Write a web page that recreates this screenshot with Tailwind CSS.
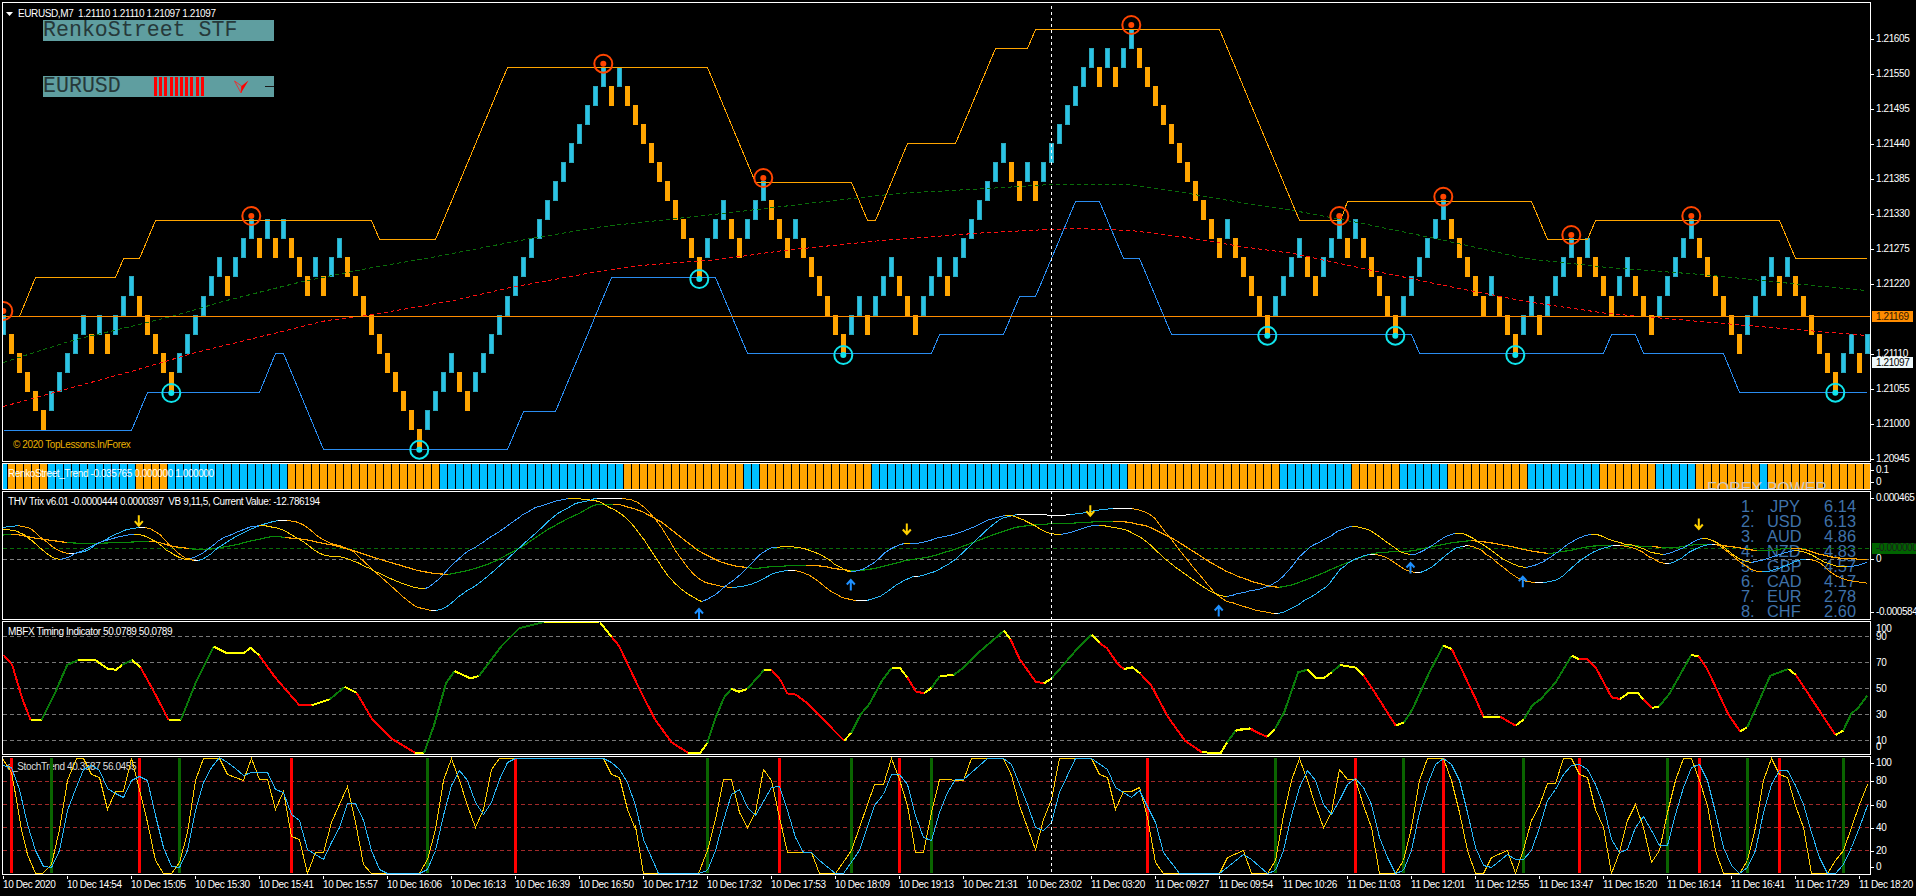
<!DOCTYPE html>
<html lang="en">
<head>
<meta charset="UTF-8">
<title>EURUSD,M7</title>
<script src="https://cdn.jsdelivr.net/npm/@tailwindcss/browser@4"></script>
</head>
<body class="bg-black">
<div class="w-[1916px] h-[896px] overflow-hidden bg-black text-white pt-[2px] pl-[2px] flex flex-col gap-px font-['Liberation_Sans'] text-[10px] tracking-[-0.4px] leading-none">

  <!-- main chart -->
  <div class="flex h-[461px]">
    <div id="mainPane" class="relative w-[1869px] border border-white overflow-hidden">
      <div class="absolute left-[3px] top-[6px] z-10 flex items-center gap-[5px] whitespace-pre">
        <svg width="7" height="4" viewBox="0 0 7 4"><path d="M0 0H7L3.5 4Z" fill="#fff"/></svg>
        <span>EURUSD,M7  1.21110 1.21110 1.21097 1.21097</span>
      </div>
      <div class="absolute left-[40px] top-[17px] z-10 flex flex-col gap-[35px] w-[231px] font-['Liberation_Mono'] text-[21.6px] tracking-normal text-[#26393a]">
        <div class="h-[21px] bg-[#5f9ea0] flex items-center">RenkoStreet STF</div>
        <div class="relative h-[21px] bg-[#5f9ea0] flex items-center">
          <span class="w-[111px]">EURUSD</span>
          <div class="flex gap-[2.2px] h-[19px]">
            <i class="w-[3px] bg-[#ff0000]"></i><i class="w-[3px] bg-[#ff0000]"></i><i class="w-[3px] bg-[#ff0000]"></i><i class="w-[3px] bg-[#ff0000]"></i><i class="w-[3px] bg-[#ff0000]"></i><i class="w-[3px] bg-[#ff0000]"></i><i class="w-[3px] bg-[#ff0000]"></i><i class="w-[3px] bg-[#ff0000]"></i><i class="w-[3px] bg-[#ff0000]"></i><i class="w-[3px] bg-[#ff0000]"></i>
          </div>
          <svg class="ml-[30px]" width="15" height="14" viewBox="0 0 15 14"><path d="M0.5 1L7 13L7.5 6Z" fill="none" stroke="#ff2020" stroke-width="0.8"/><path d="M14.5 0.5L7.5 6L7 13Z" fill="#ff0000"/></svg>
          <span class="ml-auto w-[9px] h-px bg-[#1a1a1a]"></span>
        </div>
      </div>
      <div class="absolute left-[10px] top-[437px] z-10 text-[#e8b000] whitespace-pre">© 2020 TopLessons.In/Forex</div>
    </div>
    <div id="mainAxis" class="relative flex-1"></div>
  </div>

  <!-- trend strip -->
  <div class="flex h-[27px]">
    <div id="trendPane" class="relative w-[1869px] border border-white overflow-hidden">
      <div class="absolute left-[5px] top-[5px] z-10 whitespace-pre">RenkoStreet_Trend -0.035765 0.000000 1.000000</div>
      <div class="absolute left-[1704px] top-[17px] z-10 text-[16px] tracking-normal text-[#c8c8c8] whitespace-pre">FOREX POWER</div>
    </div>
    <div id="trendAxis" class="relative flex-1"></div>
  </div>

  <!-- THV Trix -->
  <div class="flex h-[129px]">
    <div id="trixPane" class="relative w-[1869px] border border-white overflow-hidden">
      <div class="absolute left-[5px] top-[5px] z-10 whitespace-pre">THV Trix v6.01 -0.0000444 0.0000397  VB 9,11,5, Current Value: -12.786194</div>
      <div class="absolute left-[1738px] top-[7px] grid grid-cols-[26px_33px_56px] text-[16.4px] leading-[15px] tracking-normal text-[#3f72aa] whitespace-pre">
        <span>1.</span><span class="text-right">JPY</span><span class="text-right">6.14</span>
        <span>2.</span><span class="text-right">USD</span><span class="text-right">6.13</span>
        <span>3.</span><span class="text-right">AUD</span><span class="text-right">4.86</span>
        <span>4.</span><span class="text-right">NZD</span><span class="text-right">4.83</span>
        <span>5.</span><span class="text-right">GBP</span><span class="text-right">4.57</span>
        <span>6.</span><span class="text-right">CAD</span><span class="text-right">4.17</span>
        <span>7.</span><span class="text-right">EUR</span><span class="text-right">2.78</span>
        <span>8.</span><span class="text-right">CHF</span><span class="text-right">2.60</span>
      </div>
    </div>
    <div id="trixAxis" class="relative flex-1"></div>
  </div>

  <!-- MBFX -->
  <div class="flex h-[134px]">
    <div id="mbfxPane" class="relative w-[1869px] border border-white overflow-hidden">
      <div class="absolute left-[5px] top-[5px] z-10 whitespace-pre">MBFX Timing Indicator 50.0789 50.0789</div>
    </div>
    <div id="mbfxAxis" class="relative flex-1"></div>
  </div>

  <!-- StochTrend -->
  <div class="flex h-[119px]">
    <div id="stochPane" class="relative w-[1869px] border border-white overflow-hidden">
      <div class="absolute left-[4px] top-[5px] whitespace-pre text-[#dddddd]">e_StochTrend 40.3587 56.0455</div>
    </div>
    <div id="stochAxis" class="relative flex-1"></div>
  </div>

  <!-- time axis -->
  <div id="timeAxis" class="flex pl-px"></div>
</div>

<script>
  const NS = "http://www.w3.org/2000/svg";
  const CROSS_X = 1051.5;
  const THIN = 1;

  // zoomed trace -> page pixels
  const map = (s, sx, ox, oy, sy = 3) => s.trim().split(/\s+/).map(t => {
    const [a, b] = t.split(",").map(Number);
    return [ox + a / sx, oy + b / sy];
  });
  const snap = pts => pts.map(([x, y]) => [Math.floor(x) + .5, Math.floor(y) + .5]);

  // corner cutting, the indicator curves are smooth
  function chaikin(pts, rounds = 2) {
    let out = pts;
    for (let r = 0; r < rounds; r++) {
      const next = [out[0]];
      for (let i = 1; i < out.length; i++) {
        const [a, b] = [out[i - 1], out[i]];
        next.push([a[0] * .75 + b[0] * .25, a[1] * .75 + b[1] * .25], [a[0] * .25 + b[0] * .75, a[1] * .25 + b[1] * .75]);
      }
      next.push(out[out.length - 1]);
      out = next;
    }
    return out;
  }

  function el(parent, tag, attrs) {
    const node = document.createElementNS(NS, tag);
    for (const k in attrs) node.setAttribute(k, attrs[k]);
    parent.appendChild(node);
    return node;
  }

  function paneSvg(id, top, h) {
    const svg = el(document.getElementById(id), "svg", {
      viewBox: `3 ${top + 1} 1867 ${h - 2}`, width: 1867, height: h - 2,
      "shape-rendering": "crispEdges"
    });
    svg.classList.add("absolute", "inset-0");
    return svg;
  }

  const poly = (svg, pts, color, extra = {}) => el(svg, "polyline", {
    points: pts.map(p => p.join(",")).join(" "), fill: "none", stroke: color, "stroke-width": 1, ...extra
  });
  const thin = (svg, pts, color, extra = {}) => poly(svg, snap(pts), color, { "stroke-width": THIN, ...extra });
  const dashed = (svg, y, color, dash = "4 3") => el(svg, "line", {
    x1: 3, x2: 1870, y1: y + .5, y2: y + .5, stroke: color, "stroke-dasharray": dash
  });
  const cross = svg => el(svg, "line", {
    x1: CROSS_X, x2: CROSS_X, y1: 0, y2: 900, stroke: "#fff", "stroke-dasharray": "3 3"
  });

  // segments coloured by direction
  function slopeLine(svg, pts, up, down, flat, width = THIN) {
    for (let i = 1; i < pts.length; i++) {
      const dy = pts[i][1] - pts[i - 1][1], dx = pts[i][0] - pts[i - 1][0];
      const c = Math.abs(dy) < Math.abs(dx) * .06 ? flat : dy < 0 ? up : down;
      el(svg, "line", { x1: pts[i - 1][0], y1: Math.floor(pts[i - 1][1]) + .5, x2: pts[i][0], y2: Math.floor(pts[i][1]) + .5, stroke: c, "stroke-width": width });
    }
  }

  function axis(id, items, top) {
    const box = document.getElementById(id);
    items.forEach(([y, text, tick]) => {
      const label = document.createElement("div");
      label.className = "absolute left-[5px] -translate-y-1/2 whitespace-pre";
      label.style.top = (y - top) + "px";
      label.textContent = text;
      box.appendChild(label);
      if (tick) {
        const t = document.createElement("div");
        t.className = "absolute left-0 w-[3px] h-px bg-white";
        t.style.top = Math.round(y - top) + "px";
        box.appendChild(t);
      }
    });
  }

  function tag(id, y, h, text, cls, top) {
    const t = document.createElement("div");
    t.className = "absolute left-px h-[11px] flex items-center pl-[4px] z-10 whitespace-pre overflow-hidden " + cls;
    t.style.top = (y - top) + "px";
    t.textContent = text;
    document.getElementById(id).appendChild(t);
  }

  /* ---------- main pane ---------- */
  const bricks = `15u 16d 17d 18d 19d 20d 19u 18u 17u 16u 15u 16d 15u 16d 15u 14u 13u 14d 15d 16d 17d 18d
    17u 16u 15u 14u 13u 12u 13d 12u 11u 10u 11d 10u 11d 10u 11d 12d 13d 12u 13d 12u 11u 12d 13d 14d 15d 16d 17d 18d 19d 20d 21d
    20u 19u 18u 17u 18d 19d 18u 17u 16u 15u 14u 13u 12u 11u 10u 9u 8u 7u 6u 5u 4u 3u 2u 3d 2u 3d 4d 5d 6d 7d 8d 9d 10d 11d 12d
    11u 10u 9u 10d 11d 10u 9u 8u 9d 10d 11d 10u 11d 12d 13d 14d 15d 16d 15u 14u 15d 14u 13u 12u 13d 14d 15d 14u 13u 12u 13d
    12u 11u 10u 9u 8u 7u 6u 7d 8d 7u 8d 7u 6u 5u 4u 3u 2u 1u 2d 1u 2d 1u 0u 1d 2d 3d 4d 5d 6d 7d 8d 9d 10d 11d 10u 11d
    12d 13d 14d 15d 14u 13u 12u 11u 12d 13d 12u 11u 10u 11d 10u 11d 12d 13d 14d 15d 14u 13u 12u 11u 10u 9u 10d 11d 12d 13d 14d
    13u 14d 15d 16d 15u 14u 15d 14u 13u 12u 11u 12d 11u 12d 13d 14d 13u 12u 13d 14d 15d 14u 13u 12u 11u 10u 11d 12d 13d 14d 15d 16d
    15u 14u 13u 12u 13d 12u 13d 14d 15d 16d 17d 18d 17u 16u 17d 16u`.trim().split(/\s+/);

  const main = paneSvg("mainPane", 2, 461);
  const z9 = (s, sy = 3) => map(s, 2.45, 600, 0, sy);
  const z10 = s => map(s, 2.45, 1240, 170);

  bricks.forEach((b, i) => {
    const n = parseInt(b), up = b.endsWith("u");
    el(main, "rect", {
      x: 8 * i + 1.5, y: Math.floor(29.3 + 19.05 * n) + .5, width: 4, height: 19,
      fill: up ? "#2bc3e6" : "#ffa500", stroke: up ? "#2aa9bd" : "#ffa500"
    });
  });

  // moving averages
  const green = [...map("8,187 100,150 185,118 300,85 420,48 555,0", 2.45, 0, 300),
    ...map("740,845 900,805 1070,770 1300,715", 2.45, 0, 0),
    ...z9("8,680 300,640 530,607 730,580 950,565 1105,553 1290,553 1400,570"),
    ...z10("0,97 130,122 300,160 480,205 700,265 900,292 1130,313 1350,340 1535,362")];
  const red = [...map("8,318 150,270 330,212 480,158 650,105 800,60 900,45 1110,0", 2.45, 0, 300),
    ...map("1250,862", 2.45, 0, 0),
    ...z9("8,812 100,797 290,777 450,750 690,722 950,697 1100,689 1170,685 1300,691 1440,712"),
    ...z10("0,229 130,250 300,295 500,345 700,395 900,430 1100,452 1300,472 1535,497")];
  thin(main, green, "#0a6e0a", { "stroke-dasharray": "4 3" });
  thin(main, red, "#ff1010", { "stroke-dasharray": "4 3" });

  // resistance / support
  thin(main, [[3,316],[19.5,316],[35.5,277.5],[115.5,277.5],[123.5,258.5],[139.5,258.5],[155.5,220.5],[371,220.5],[379.6,239.5],[435.9,239.5],[507.7,67.5],[707.8,67.5],[755.5,182.5],[851.4,182.5],[867.3,220.5],[875.9,220.5],[907.3,143.5],[955.5,143.5],[995.5,48.5],[1027.3,48.5],[1035.5,29.5],[1219.6,29.5],[1278.4,170],[1299.6,220.5],[1340,220.5],[1347.3,201.5],[1531.4,201.5],[1547.3,239.5],[1587.3,239.5],[1595.5,220.5],[1779.6,220.5],[1795.5,258.5],[1866.5,258.5]], "#ffa500");
  thin(main, [[3,430.5],[131.4,430.5],[147.3,392.5],[259.6,392.5],[275.5,353.5],[283.7,353.5],[323.7,449.5],[507.3,449.5],[523.3,411.5],[555.5,411.5],[611.4,277.5],[715.5,277.5],[747.3,353.5],[931.4,353.5],[939.6,334.5],[1003.7,334.5],[1019.6,296.5],[1035.5,296.5],[1075.5,201.5],[1099.6,201.5],[1123.3,258.5],[1139.6,258.5],[1171.4,334.5],[1411.4,334.5],[1419.6,353.5],[1603.3,353.5],[1611.4,334.5],[1635.5,334.5],[1643.7,353.5],[1723.7,353.5],[1739.6,392.5],[1866.5,392.5]], "#2a8cf0");

  // current bid line
  el(main, "rect", { x: 3, y: 316, width: 1867, height: 1, fill: "#ff8c00" });

  // swing markers
  const marks = [[0,311,"#ff4500"],[31,216,"#ff4500"],[75,63.7,"#ff4500"],[95,178,"#ff4500"],[141,25,"#ff4500"],[167,216,"#ff4500"],[180,196.7,"#ff4500"],[196,235,"#ff4500"],[211,216,"#ff4500"],
    [21,393,"#10e4ec"],[52,449.7,"#10e4ec"],[87,279,"#10e4ec"],[105,355,"#10e4ec"],[158,335.7,"#10e4ec"],[174,335.7,"#10e4ec"],[189,355,"#10e4ec"],[229,392.7,"#10e4ec"]];
  marks.forEach(([i, y, c]) => {
    const x = 8 * i + 3.3;
    el(main, "circle", { cx: x, cy: y, r: 9, fill: "none", stroke: c, "stroke-width": 2, "shape-rendering": "auto" });
    el(main, "circle", { cx: x, cy: y, r: 3, fill: c, "shape-rendering": "auto" });
  });
  cross(main);

  const prices = ["1.21605","1.21550","1.21495","1.21440","1.21385","1.21330","1.21275","1.21220",null,"1.21110","1.21055","1.21000","1.20945"];
  axis("mainAxis", prices.map((p, k) => [38.6 + 35 * k, p, true]).filter(r => r[1]), 2);
  tag("mainAxis", 311, 11, "1.21169", "w-[41px] bg-[#ff8c00] text-[#2a1600]", 2);
  tag("mainAxis", 357, 11, "1.21097", "w-[41px] bg-[#eef8fa] text-black", 2);

  /* ---------- trend strip ---------- */
  const trend = paneSvg("trendPane", 464, 27);
  const blueRuns = [[0,0],[6,16],[21,35],[55,77],[93,94],[109,140],[160,168],[175,180],[191,199],[207,211],[220,220]];
  for (let i = 0; i < 234; i++) {
    const blue = blueRuns.some(([a, b]) => i >= a && i <= b);
    el(trend, "rect", { x: 8 * i, y: 465, width: 7, height: 25, fill: blue ? "#00bfff" : "#ffa500" });
  }
  axis("trendAxis", [[471, "0.1", true], [483, "0", true]], 464);

  /* ---------- THV Trix ---------- */
  const trix = paneSvg("trixPane", 492, 129);
  const z3 = s => map(s, 2.45, 0, 440);
  const z11 = s => map(s, 2.376, 600, 460);
  const z12 = s => map(s, 2.376, 1240, 460);
  dashed(trix, 549, "#0a6e0a");
  dashed(trix, 560, "#808080");

  const sig = [...z3("7,288 40,285 180,318 340,307 380,307 450,330 540,330 650,295 700,292 830,320 1060,412 1160,395 1250,345 1350,265 1460,197"),
    ...z11("0,135 50,135 130,170 250,295 340,330 420,322 500,317 590,335 640,332 720,305 780,295 880,255 980,205 1040,195 1130,192 1210,184 1290,195 1350,230 1470,325"),
    ...z12("0,355 75,385 120,383 240,320 300,285 350,278 420,275 520,243 600,250 720,283 750,283 840,258 950,260 1030,267 1090,255 1150,258 1240,280 1320,262 1400,295 1490,302")];
  const fast = [...z3("7,270 40,275 70,295 100,330 140,367 190,342 250,305 320,286 345,286 380,305 420,345 460,366 500,340 540,300 600,268 640,257 690,270 740,305 790,352 850,355 900,385 950,415 1030,453 1060,440 1130,350 1170,320 1250,255 1300,210 1380,178 1410,178 1460,185"),
    ...z11("0,130 60,170 110,250 170,370 235,427 255,425 300,380 345,335 380,285 410,262 480,265 530,290 575,330 597,340 640,325 700,255 760,253 800,237 850,227 960,160 1010,185 1070,227 1110,225 1170,197 1210,200 1280,225 1350,310 1470,418"),
    ...z12("0,402 70,385 105,350 160,265 205,240 240,210 280,200 320,220 390,290 430,283 500,222 530,222 570,250 660,330 710,320 790,245 840,220 900,252 940,260 1000,292 1050,270 1095,235 1130,245 1200,315 1240,305 1330,265 1400,320 1450,325 1490,310")];
  const slow = [...z3("7,265 65,258 100,295 150,342 200,345 250,305 320,265 375,265 420,325 460,365 500,363 550,310 650,247 735,243 800,315 850,322 900,375 1000,490 1040,513 1085,513 1130,465 1170,440 1280,320 1380,205 1460,178"),
    ...z11("0,118 85,118 140,190 200,320 255,380 350,388 420,335 490,335 560,410 600,424 655,424 730,355 770,352 840,310 900,235 960,167 1040,168 1130,168 1205,148 1300,148 1350,230 1400,310 1470,418"),
    ...z12("0,440 65,463 105,463 160,420 210,380 240,325 290,287 340,287 400,340 445,340 510,262 560,260 600,300 670,370 750,372 800,310 860,262 930,258 995,313 1035,313 1070,275 1110,255 1140,256 1210,335 1260,340 1330,300 1370,300 1420,360 1490,372")];
  slopeLine(trix, chaikin(sig), "#0a8a0a", "#ffa500", "#0a8a0a", 1.2);
  slopeLine(trix, chaikin(slow), "#29b6f6", "#ffa500", "#ffffff");
  slopeLine(trix, chaikin(fast), "#3a9cff", "#ffcc00", "#ffcc00");

  function arrow(x, y, down) {
    const s = down ? 1 : -1;
    el(trix, "path", {
      d: `M${x} ${y - 5.5 * s}V${y + 5 * s}M${x - 4} ${y + .5 * s}L${x} ${y + 5 * s}L${x + 4} ${y + .5 * s}`,
      fill: "none", stroke: down ? "#ffd000" : "#1e90ff", "stroke-width": 2, "shape-rendering": "auto"
    });
  }
  [[138.8,521.7],[906.8,530],[1090.3,511.7],[1698.8,525]].forEach(([x, y]) => arrow(x, y, true));
  [[699,615],[850.8,586],[1218.7,612],[1410.5,569],[1522.8,582.7]].forEach(([x, y]) => arrow(x, y, false));
  cross(trix);
  axis("trixAxis", [[499, "0.000465", true], [560, "0", true], [613, "-0.000584", true]], 492);
  tag("trixAxis", 543.5, 11, "-0.000000", "w-[45px] bg-[#006400] text-[#1c1c1c]", 492);

  /* ---------- MBFX ---------- */
  const mbfx = paneSvg("mbfxPane", 622, 134);
  [637, 663, 689, 715, 741].forEach(y => dashed(mbfx, y, "#777777"));
  const ov = s => map(s, 0.8184, 0, 0, 0.8184);
  const runs = [
    ["R", ov("3,537 10,545 18,572 25,590")], ["Y", ov("25,590 34,590")], ["G", ov("34,590 45,568 55,545 64,541")],
    ["Y", ov("64,541 78,541 88,548 95,549 100,545")], ["G", ov("100,545 108,541")], ["Y", ov("108,541 115,547")],
    ["R", ov("115,547 125,565 138,590")], ["Y", ov("138,590 148,590")], ["G", ov("148,590 160,560 175,530")],
    ["Y", ov("175,530 185,535 200,535 205,531 212,537")], ["R", ov("212,537 225,555 245,578 255,578")], ["Y", ov("255,578 270,573")],
    ["G", ov("270,573 282,563")], ["Y", ov("282,563 292,568")], ["R", ov("292,568 305,590 320,605 340,617")],
    ["Y", ov("340,617 347,617")], ["G", ov("347,617 355,595 365,560 372,550")], ["Y", ov("372,550 385,556 392,554")],
    ["G", ov("392,554 410,530 425,515 445,510")], ["Y", ov("445,510 490,510")],
    ["Y", z11("0,490 27,533")], ["R", z11("27,533 45,560 90,680 130,780 170,850 210,882")], ["Y", z11("210,882 238,882 255,852")],
    ["G", z11("255,852 275,775 295,715 312,690")], ["Y", z11("312,690 330,698 350,690")], ["G", z11("350,690 385,640 390,632")],
    ["Y", z11("390,632 407,632")], ["R", z11("407,632 430,665 445,703 465,707 490,730 580,845")], ["Y", z11("580,845 597,822")],
    ["G", z11("597,822 620,765 640,735 670,665 693,626")], ["Y", z11("693,626 712,626 730,655")], ["R", z11("730,655 750,697 770,703")],
    ["Y", z11("770,703 787,687")], ["G", z11("787,687 808,651")], ["Y", z11("808,651 840,648")], ["G", z11("840,648 865,625 900,580 960,515")],
    ["Y", z11("960,515 975,540")], ["R", z11("975,540 997,600 1035,668 1055,673")], ["Y", z11("1055,673 1073,658")],
    ["G", z11("1073,658 1130,575 1168,527")], ["Y", z11("1168,527 1187,552")], ["R", z11("1187,552 1205,568 1230,615 1245,630")],
    ["Y", z11("1245,630 1265,625 1283,643")], ["R", z11("1283,643 1310,680 1350,775 1390,845 1430,880")], ["Y", z11("1430,880 1475,882 1490,850")],
    ["G", z11("1490,850 1510,815")], ["Y", z11("1510,815 1545,808")], ["R", z11("1545,808 1568,825")],
    ["Y", z12("0,810 25,810")], ["R", z12("25,810 65,834")], ["Y", z12("65,834 83,810")], ["G", z12("83,810 105,760 138,640 160,632")],
    ["Y", z12("160,632 180,657 200,657 218,640")], ["G", z12("218,640 238,618")], ["Y", z12("238,618 275,626 293,648")],
    ["R", z12("293,648 315,690 370,800")], ["Y", z12("370,800 390,790")], ["G", z12("390,790 410,750 450,640 483,560")],
    ["Y", z12("483,560 503,570")], ["R", z12("503,570 530,640 560,720 578,773")], ["Y", z12("578,773 618,773")],
    ["R", z12("618,773 655,800")], ["Y", z12("655,800 675,780")], ["G", z12("675,780 695,738 715,720 750,670 788,590")],
    ["Y", z12("788,590 805,600")], ["R", z12("805,600 825,600 845,625 883,715 903,720")], ["Y", z12("903,720 923,702 945,702 958,720")],
    ["R", z12("958,720 978,747")], ["Y", z12("978,747 995,743")], ["G", z12("995,743 1020,705 1072,588")], ["Y", z12("1072,588 1090,592")],
    ["R", z12("1090,592 1110,630 1160,765 1188,817")], ["Y", z12("1188,817 1205,805")], ["G", z12("1205,805 1225,750 1260,650 1303,630")],
    ["Y", z12("1303,630 1320,647")], ["R", z12("1320,647 1340,685 1415,828")], ["Y", z12("1415,828 1433,815")], ["G", z12("1433,815 1452,765 1470,745 1490,710")]
  ];
  const runColor = { R: "#ff0000", G: "#0a7a0a", Y: "#ffff00" };
  runs.forEach(([c, pts]) => poly(mbfx, pts, runColor[c], { "stroke-width": 2 }));
  cross(mbfx);
  axis("mbfxAxis", [[629.7, "100", false], [637.7, "90", false], [663.3, "70", false], [689.3, "50", false], [715.3, "30", false], [741.3, "10", false], [748, "0", false]], 622);

  /* ---------- StochTrend ---------- */
  const stoch = paneSvg("stochPane", 757, 119);
  const z4 = s => map(s, 2.45, 0, 740);
  [782, 805, 828, 851].forEach(y => dashed(stoch, y, "#a02a2a"));

  const yel = [...z4("7,57 27,100 40,180 53,270 68,345 88,403 105,403 125,375 145,270 165,125 187,58 205,58 224,105 243,115 263,212 282,157 302,157 322,58 342,150 361,250 381,365 400,403 420,403 439,370 459,280 479,125 498,58 537,58 557,105 597,125 616,58 636,120 655,120 675,210 694,157 714,292 733,300 753,403 772,340 792,340 812,250 851,142 870,250 890,375 910,403 1027,403 1047,360 1067,270 1086,125 1106,58 1126,125 1145,200 1165,265 1185,210 1204,90 1224,58 1478,58 1498,105 1518,115 1537,210 1557,270"),
    ...z11("84,1100 103,1243 235,1243 255,1175 275,1080 293,960 313,960 332,1060 351,1105 370,1060 388,930 407,965 426,1075 445,1180 502,1180 521,1243 560,1243 597,1175 616,1105 653,975 673,975 692,897 711,960 730,1040 749,1180 768,1180 787,1060 806,962 863,965 882,897 958,897 977,950 996,1040 1034,1170 1053,1080 1072,1020 1091,897 1168,897 1187,945 1206,955 1225,1050 1244,997 1263,997 1282,985 1301,1075 1320,1210 1340,1243 1472,1243 1491,1195 1529,1175"),
    ...z12("28,1243 65,1243 84,1205 103,1070 122,965 141,897 160,965 179,1040 198,1105 217,1060 236,930 255,962 274,962 293,1040 312,1105 331,1243 370,1243 388,1205 407,1105 426,965 445,897 483,897 502,965 521,1060 540,1175 559,1243 578,1243 597,1195 635,1175 654,1243 673,1170 692,1085 711,1040 730,972 749,972 768,897 787,897 806,945 825,955 844,1050 863,1105 882,1243 901,1180 920,1085 939,1037 958,1105 977,1210 996,1175 1015,1060 1034,965 1053,897 1072,897 1091,965 1110,1040 1129,1175 1148,1243 1186,1243 1205,1205 1224,1105 1243,965 1262,897 1281,945 1300,955 1319,1040 1338,1105 1357,1243 1395,1243 1414,1205 1433,1175 1452,1105 1471,1037 1490,975")];
  const blu = [...z4("7,80 27,85 47,150 68,255 88,335 106,382 125,385 146,335 165,215 185,150 204,92 224,78 243,95 263,148 282,162 302,175 322,125 342,112 361,125 381,230 400,325 420,382 439,385 459,335 479,215 498,130 518,85 537,55 557,70 577,88 597,110 616,100 655,100 675,150 694,160 714,225 733,245 753,332 772,345 792,360 812,310 832,265 851,192 870,192 890,245 910,335 929,392 949,403 1027,403 1047,390 1067,335 1086,230 1106,140 1126,95 1145,125 1165,190 1185,225 1204,190 1224,120 1243,70 1263,58 1478,58 1498,70 1518,90 1537,130 1557,200"),
    ...z11("84,1040 103,1140 140,1243 235,1243 255,1235 275,1175 293,1085 313,1005 332,990 351,1045 370,1070 407,985 426,982 445,1055 464,1135 483,1180 502,1180 521,1205 560,1243 578,1243 616,1175 653,1040 673,1005 692,945 711,945 730,975 749,1070 768,1135 787,1143 806,1060 825,1000 845,962 863,962 920,897 958,897 977,915 1015,1035 1034,1105 1053,1115 1072,1090 1091,1000 1130,897 1168,897 1206,930 1225,985 1263,1015 1282,995 1320,1090 1340,1180 1377,1243 1472,1243 1529,1187"),
    ...z12("28,1200 65,1243 84,1235 103,1175 122,1070 141,985 160,935 179,965 198,1035 217,1065 236,1025 255,975 274,958 293,985 312,1035 331,1135 350,1195 370,1243 388,1235 407,1175 426,1060 445,975 464,915 483,897 502,915 521,965 540,1060 559,1165 578,1220 597,1225 635,1187 654,1200 673,1200 692,1175 711,1105 730,1025 749,990 768,945 787,920 806,915 825,930 844,975 863,1040 882,1140 901,1180 920,1170 939,1105 958,1072 977,1115 996,1160 1015,1160 1034,1065 1053,985 1072,925 1091,915 1110,965 1129,1060 1148,1165 1167,1220 1186,1243 1205,1225 1224,1175 1243,1060 1262,975 1281,935 1300,935 1319,980 1338,1035 1357,1120 1376,1195 1395,1243 1414,1243 1433,1215 1452,1165 1471,1105 1490,1040")];

  const signals = { "#ff0000": [11,139,291.4,515.5,779.3,899.2,1147,1355.3,1443.3,1579.2,1699.2,1779.2],
                    "#0a6400": [51,179,427.3,707.3,851.3,931.2,1275.4,1403.3,1523.3,1667.2,1747,1843] };
  for (const c in signals) signals[c].forEach(x => el(stoch, "rect", { x: Math.round(x - 1.5), y: 759, width: 3, height: 115, fill: c }));
  thin(stoch, yel, "#ffcc00");
  thin(stoch, blu, "#29b6f6");
  cross(stoch);
  axis("stochAxis", [[764.3, "100", true], [782.3, "80", true], [805.7, "60", true], [828.7, "40", true], [851.7, "20", true], [868.3, "0", true]], 757);

  /* ---------- time axis ---------- */
  const times = ["10 Dec 2020","10 Dec 14:54","10 Dec 15:05","10 Dec 15:30","10 Dec 15:41","10 Dec 15:57","10 Dec 16:06","10 Dec 16:13","10 Dec 16:39","10 Dec 16:50","10 Dec 17:12","10 Dec 17:32","10 Dec 17:53","10 Dec 18:09","10 Dec 19:13","10 Dec 21:31","10 Dec 23:02","11 Dec 03:20","11 Dec 09:27","11 Dec 09:54","11 Dec 10:26","11 Dec 11:03","11 Dec 12:01","11 Dec 12:55","11 Dec 13:47","11 Dec 15:20","11 Dec 16:14","11 Dec 16:41","11 Dec 17:29","11 Dec 18:20"];
  const timeAxis = document.getElementById("timeAxis");
  times.forEach(t => {
    const cell = document.createElement("div");
    cell.className = "relative w-[64px] shrink-0 h-[20px] whitespace-pre";
    cell.innerHTML = `<div class="absolute left-0 top-0 w-px h-[3px] bg-white"></div><div class="absolute left-0 top-[4px]">${t}</div>`;
    timeAxis.appendChild(cell);
  });
</script>
</body>
</html>
